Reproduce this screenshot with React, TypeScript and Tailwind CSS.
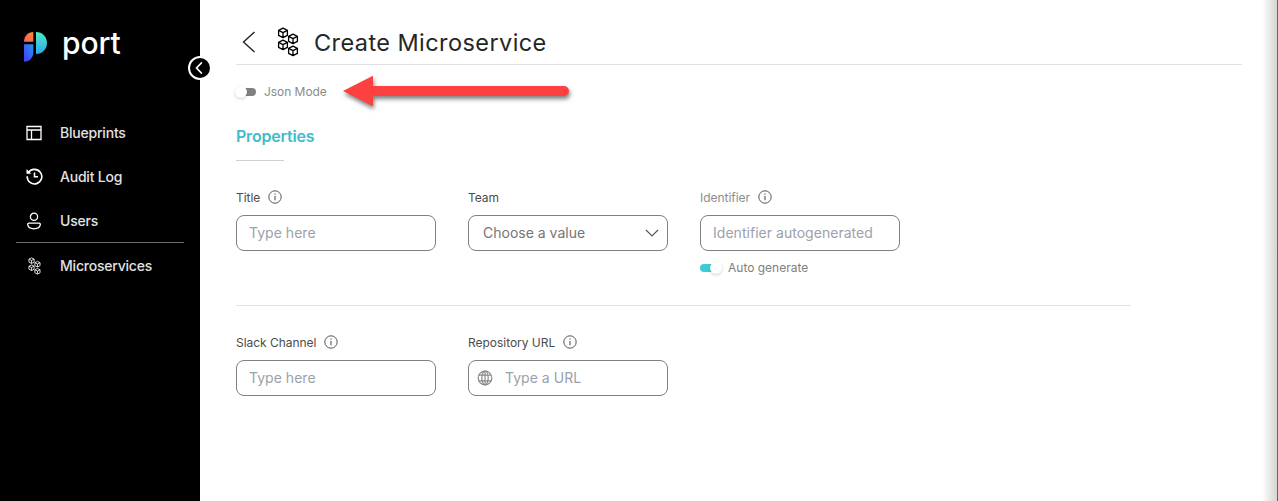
import type { ReactNode } from "react";

const cubes = [
  [6, 6],
  [16, 12],
  [6, 18],
  [16, 24],
];

function Microservice({ className, strokeWidth }: { className: string; strokeWidth: number }) {
  return (
    <svg viewBox="0 0 22 30" className={className} fill="none" stroke="currentColor" strokeWidth={strokeWidth} strokeLinejoin="round">
      {cubes.map(([x, y]) => (
        <path key={y} transform={`translate(${x} ${y})`} d="M0-4.800 4.400-2.600V2.400L0 4.700-4.400 2.400V-2.600ZM-4.400-2.600 0-.4 4.400-2.600M0-.4V4.700" />
      ))}
    </svg>
  );
}

function Info() {
  return (
    <svg viewBox="0 0 14 14" className="-mt-0.5 size-[14px] shrink-0" fill="none" stroke="#555555">
      <circle cx="7" cy="7" r="6.2" strokeWidth="1" />
      <path d="M7 6v4.2M7 3.6v1.2" strokeWidth="1.1" />
    </svg>
  );
}

function NavItem({ icon, label }: { icon: ReactNode; label: string }) {
  return (
    <div className="flex h-[44px] items-center pl-[26px]">
      <span className="-mt-px flex w-4 justify-center">{icon}</span>
      <span className="-mt-px ml-[18px] text-[14px] font-medium tracking-[-0.015em] text-[#e2e2e2]">{label}</span>
    </div>
  );
}

function Field({ label, info, muted, children }: { label: string; info?: boolean; muted?: boolean; children: ReactNode }) {
  return (
    <div className="w-[200px]">
      <div className="flex h-5 items-center gap-[7.5px]">
        <span className={muted ? "text-[12px] tracking-[-0.03px] text-[#8c8c8c]" : "text-[12px] tracking-[-0.03px] text-[#4c4c4c]"}>{label}</span>
        {info && <Info />}
      </div>
      <div className="mt-[7px]">{children}</div>
    </div>
  );
}

function TextBox({ text, icon }: { text: string; icon?: ReactNode }) {
  return (
    <div className="flex h-9 items-center rounded-lg border border-[#808080] pb-px pl-3 text-[14px] text-[#9ca0ab]">
      {icon && <span className="mr-3 -ml-1">{icon}</span>}
      <span className="tracking-[0.03px]">{text}</span>
    </div>
  );
}

function Toggle({ on }: { on?: boolean }) {
  return (
    <span className={on ? "flex h-2 w-[21px] items-center justify-end rounded-full bg-[#3dcbd6]" : "flex h-2 w-[20px] items-center rounded-full bg-[#808080]"}>
      <span className={on ? "-mr-px size-3 shrink-0 rounded-full bg-white shadow-[0_1px_3px_rgba(0,0,0,0.2)]" : "-ml-px size-3 shrink-0 rounded-full bg-white shadow-[0_1px_3px_rgba(0,0,0,0.2)]"} />
    </span>
  );
}

function Logo() {
  return (
    <svg viewBox="0 0 24 30" className="h-[30px] w-6">
      <defs>
        <linearGradient id="orange" x1="0" y1="1" x2="1" y2="0">
          <stop stopColor="#ff5b68" />
          <stop offset="1" stopColor="#ff8a26" />
        </linearGradient>
        <linearGradient id="teal" x1="0" y1="0" x2="0" y2="1">
          <stop stopColor="#55e8c3" />
          <stop offset="1" stopColor="#2aa7ed" />
        </linearGradient>
        <linearGradient id="blue" x1="1" y1="0" x2="0" y2="1">
          <stop stopColor="#2398ed" />
          <stop offset="1" stopColor="#4b35ff" />
        </linearGradient>
      </defs>
      <path d="M9.3 0v9.7H0C0 4.2 4 0 9.3 0Z" fill="url(#orange)" />
      <path d="M12 0c6.300 0 11 4.800 11 11s-4.700 11-11 11Z" fill="url(#teal)" />
      <path d="M0 12.200h9.300v8C9.300 25.500 5.400 29.700 0 29.700Z" fill="url(#blue)" />
    </svg>
  );
}

export default function App() {
  return (
    <div className="relative flex h-[501px] w-[1278px] overflow-hidden bg-white font-['Inter',sans-serif]">
      <aside className="relative w-[200px] shrink-0 bg-black text-white">
        <div className="flex h-[111px] items-start pt-8 pl-6">
          <Logo />
          <span className="mt-[-9px] ml-[14px] text-[30px] leading-[40px] font-medium tracking-[-0.1px]">port</span>
        </div>
        <NavItem
          label="Blueprints"
          icon={
            <svg viewBox="0 0 16 16" className="size-4" fill="none" stroke="currentColor" strokeWidth="1.300">
              <path d="M1 1.500h14v13H1zM1 5h14M5.500 5v9.500" />
            </svg>
          }
        />
        <NavItem
          label="Audit Log"
          icon={
            <svg viewBox="0 0 17 17" className="size-[17px] shrink-0" fill="none" stroke="currentColor" strokeWidth="1.600">
              <path d="M2.300 4.800A7.300 7.300 0 1 1 1.200 8.300M8.500 4.500v4.300H12" />
              <path d="M.5 1v4.800H5.300z" fill="currentColor" stroke="none" />
            </svg>
          }
        />
        <div>
          <NavItem
            label="Users"
            icon={
              <svg viewBox="0 0 16 18" className="h-[18px] w-4" fill="none" stroke="currentColor" strokeWidth="1.300">
                <circle cx="8" cy="4.800" r="3.600" />
                <path d="M3 11.200h10c1 0 1.500.6 1.300 1.500-.4 2.400-3 4.100-6.300 4.100s-5.900-1.700-6.300-4.100c-.2-.9.300-1.500 1.300-1.500Z" />
              </svg>
            }
          />
          <div className="mx-4 -mt-px h-px bg-[#6b6b6b]" />
        </div>
        <div className="mt-px">
          <NavItem label="Microservices" icon={<Microservice className="h-[18px] w-[13px]" strokeWidth={1.4} />} />
        </div>
        <span className="absolute top-[56px] left-[188px] z-10 flex size-6 items-center justify-center rounded-full border-2 border-white bg-black">
          <svg viewBox="0 0 12 12" className="size-3" fill="none" stroke="white" strokeWidth="1.800" strokeLinecap="round" strokeLinejoin="round">
            <path d="M7.300 1 2.500 6l4.800 5" />
          </svg>
        </span>
      </aside>

      <main className="flex-1 pr-9 pl-9">
        <header className="flex h-[65px] items-start border-b border-[#e2e2e6] pt-[27px]">
          <svg viewBox="0 0 14 22" className="mt-1 ml-[6px] h-[22px] w-[14px]" fill="none" stroke="#222222" strokeWidth="1.400">
            <path d="M12.500 1 1.500 11l11 10" />
          </svg>
          <Microservice className="ml-[21px] h-[30px] w-[22px] text-black" strokeWidth={1.3} />
          <h1 className="mt-px ml-[15px] text-[23.5px] leading-[30px] tracking-[0.42px] text-[#262626]">Create Microservice</h1>
        </header>
        <div className="mt-[17px] flex h-5 items-center gap-2 text-[12px] text-[#8c8c8c]">
          <Toggle />
          <span className="tracking-[-0.05px]">Json Mode</span>
        </div>
        <h2 className="mt-[22px] h-6 text-[16px] leading-6 font-semibold tracking-[-0.2px] text-[#3dbdc9]">Properties</h2>
        <div className="mt-3 h-px w-12 bg-[#d0d0d0]" />
        <section className="mt-[27px] flex gap-8">
          <Field label="Title" info>
            <TextBox text="Type here" />
          </Field>
          <Field label="Team">
            <div className="flex h-9 items-center justify-between rounded-lg border border-[#808080] pr-2 pb-px pl-[14px] text-[14px] text-[#757575]">
              Choose a value
              <svg viewBox="0 0 14 8" className="h-2 w-[14px]" fill="none" stroke="#555555" strokeWidth="1.100">
                <path d="m1 1 6 6 6-6" />
              </svg>
            </div>
          </Field>
          <div>
            <Field label="Identifier" info muted>
              <TextBox text="Identifier autogenerated" />
            </Field>
            <div className="mt-[7px] flex h-5 items-center gap-[7px] text-[12px] text-[#808080]">
              <Toggle on />
              <span>Auto generate</span>
            </div>
          </div>
        </section>
        <div className="mt-[27px] h-px w-[895px] bg-[#e2e2e6]" />
        <section className="mt-[27px] flex gap-8">
          <Field label="Slack Channel" info>
            <TextBox text="Type here" />
          </Field>
          <Field label="Repository URL" info>
            <TextBox
              text="Type a URL"
              icon={
                <svg viewBox="0 0 16 16" className="size-4" fill="none" stroke="#8a8a8a" strokeWidth="1.200">
                  <circle cx="8" cy="8" r="6.800" />
                  <ellipse cx="8" cy="8" rx="3.200" ry="6.800" />
                  <path d="M8 1.200v13.600M2 5.200h12M2 10.800h12" />
                </svg>
              }
            />
          </Field>
        </section>
      </main>

      <svg viewBox="0 0 240 46" className="absolute top-[70px] left-[337px] h-[46px] w-[240px] drop-shadow-[1px_3px_2px_rgba(0,0,0,0.5)]">
        <path d="M6 21 36 5.700V16h191a5 5 0 0 1 0 10H36v10.300Z" fill="#fd4141" />
      </svg>
      <div className="absolute top-0 right-0 h-full w-[16px] border-r border-[#666666] bg-linear-to-r from-white to-[#d4d4d4]" />
    </div>
  );
}
